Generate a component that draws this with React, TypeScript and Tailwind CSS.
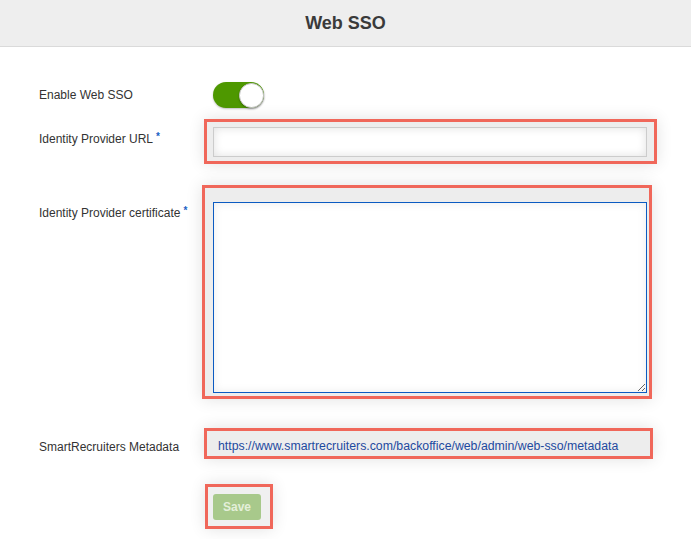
import React from 'react';

const font = { fontFamily: '"Liberation Sans", Arial, Helvetica, sans-serif' };

function Required() {
  return <span className="ml-[3px] relative -top-[3px] text-[10px] font-bold text-[#1a62c4]">*</span>;
}

export default function App() {
  return (
    <div className="w-[691px] h-[539px] bg-white text-[#333] overflow-hidden" style={font}>
      {/* Header */}
      <header className="h-[47px] bg-[#eeeeee] border-b border-[#dadada] flex items-center justify-center">
        <h1 className="text-[18px] font-bold text-[#3a3a3a]">Web SSO</h1>
      </header>

      <main className="text-[12px]">
        {/* Enable toggle */}
        <div className="mt-[35px] flex items-center h-[26px]">
          <label className="w-[204px] pl-[39px]">Enable Web SSO</label>
          <button className="ml-[9px] w-[51px] h-[26px] rounded-full bg-[#4e9800] flex items-center justify-end shadow-[0_1px_2px_rgba(0,0,0,0.25)]">
            <span className="w-[25px] h-[25px] rounded-full bg-white border border-[#c8c8c8] shadow-[0_1px_2px_rgba(0,0,0,0.3)]" />
          </button>
        </div>

        {/* Identity Provider URL */}
        <div className="mt-[11px] flex items-start">
          <label className="w-[204px] pl-[39px] pt-[12px] leading-[16px]">
            Identity Provider URL<Required />
          </label>
          <div className="w-[453px] h-[45px] border-[3px] border-[#f0675a] bg-[#ededed] pl-[6px] pr-[7px] pt-[5px] pb-[4px] shadow-[0_0_16px_rgba(0,0,0,0.12)]">
            <input className="w-full h-[30px] border border-[#cccccc] bg-white shadow-[inset_0_0_10px_rgba(0,0,0,0.12)] outline-none" />
          </div>
        </div>

        {/* Identity Provider certificate */}
        <div className="mt-[21px] flex items-start">
          <label className="w-[202px] pl-[39px] pt-[20px] leading-[16px]">
            Identity Provider certificate<Required />
          </label>
          <div className="w-[450px] h-[214px] border-[3px] border-[#f0675a] bg-[#ededed] pl-[8px] pr-[2px] pt-[14px] pb-[3px] flex shadow-[0_0_16px_rgba(0,0,0,0.12)]">
            <textarea className="w-full h-full border border-[#0b5bc2] bg-white shadow-[inset_0_0_10px_rgba(0,0,0,0.08)] outline-none" />
          </div>
        </div>

        {/* Metadata */}
        <div className="mt-[29px] flex items-start">
          <label className="w-[204px] pl-[39px] pt-[11px] leading-[16px]">SmartRecruiters Metadata</label>
          <div className="w-[449px] h-[31px] border-[3px] border-[#f0675a] bg-[#ededed] pl-[11px] flex items-center pt-[6px] shadow-[0_0_16px_rgba(0,0,0,0.12)]">
            <a className="text-[12.3px] text-[#1d4aa0]">https://www.smartrecruiters.com/backoffice/web/admin/web-sso/metadata</a>
          </div>
        </div>

        {/* Save */}
        <div className="mt-[25px] pl-[205px]">
          <div className="w-[68px] h-[45px] border-[3px] border-[#f0675a] bg-[#f0f0f0] pl-[5px] pt-[7px] shadow-[0_0_16px_rgba(0,0,0,0.12)]">
            <button className="w-[48px] h-[26px] rounded-[3px] bg-[#a8c98b] text-[#e4efd9] font-bold text-[12px]">Save</button>
          </div>
        </div>
      </main>
    </div>
  );
}
